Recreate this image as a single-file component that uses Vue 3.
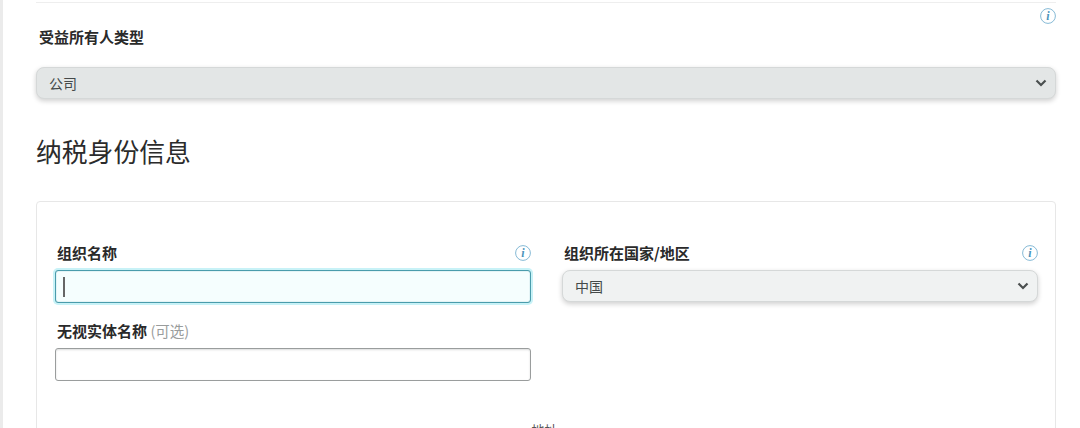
<script setup>
</script>

<template>
  <div class="page">
    <div class="content">
      <div class="top-rule"></div>
      <div class="info-row">
        <svg class="info" viewBox="0 0 16 16"><circle cx="8" cy="8" r="7.4" /><text x="8" y="12.2">i</text></svg>
      </div>
      <div class="label owner-label">受益所有人类型</div>
      <div class="select owner-select">
        <span>公司</span>
        <svg class="chev" viewBox="0 0 12 8"><path d="M1.5 1.5 6 6l4.5-4.5" /></svg>
      </div>
      <h2 class="title">纳税身份信息</h2>
      <div class="card">
        <div class="grid">
          <div class="field">
            <div class="label-row">
              <span class="label">组织名称</span>
              <svg class="info" viewBox="0 0 16 16"><circle cx="8" cy="8" r="7.4" /><text x="8" y="12.2">i</text></svg>
            </div>
            <div class="input focused"><i class="caret"></i></div>
          </div>
          <div class="field">
            <div class="label-row">
              <span class="label">组织所在国家/地区</span>
              <svg class="info" viewBox="0 0 16 16"><circle cx="8" cy="8" r="7.4" /><text x="8" y="12.2">i</text></svg>
            </div>
            <div class="select country-select">
              <span>中国</span>
              <svg class="chev" viewBox="0 0 12 8"><path d="M1.5 1.5 6 6l4.5-4.5" /></svg>
            </div>
          </div>
          <div class="field">
            <div class="label-row">
              <span class="label">无视实体名称 <span class="optional">(可选)</span></span>
            </div>
            <div class="input"></div>
          </div>
        </div>
        <div class="address">地址</div>
      </div>
    </div>
  </div>
</template>

<style>
html, body { margin: 0; height: 428px; overflow: hidden; background: #fff; }
</style>

<style scoped>
.page {
  box-sizing: border-box;
  height: 428px;
  overflow: hidden;
  border-left: 3px solid #ebebeb;
  padding: 2px 24px 0 33px;
  font-family: "Noto Sans CJK SC", "Liberation Sans", sans-serif;
  color: #2b2b2b;
}
.top-rule { height: 1px; background: #eeeeee; }
.info-row { display: flex; justify-content: flex-end; padding: 5px 0.5px 0 0; height: 15px; }
.info { width: 16px; height: 16px; flex: none; }
.info circle { fill: #fff; stroke: #86bad6; stroke-width: 1; }
.info text {
  fill: #4c94bb;
  font-family: "Liberation Serif", serif;
  font-style: italic;
  font-weight: 700;
  font-size: 12px;
  text-anchor: middle;
}
.label { font-size: 15px; font-weight: 700; line-height: 20px; color: #2a2a2a; }
.owner-label { padding: 4px 0 0 3px; }
.select {
  box-sizing: border-box;
  display: flex;
  align-items: center;
  justify-content: space-between;
  height: 32px;
  border: 1px solid #d5d8d8;
  border-radius: 8px;
  padding: 0 8px 0 12px;
  font-size: 14px;
  color: #444949;
  box-shadow: 0 2px 5px rgba(15, 17, 17, 0.2);
}
.owner-select { margin-top: 20px; background: #e3e6e6; width: 1020px; }
.country-select { background: #f0f2f2; }
.chev { width: 12px; height: 8px; }
.chev path { fill: none; stroke: #4a4f4f; stroke-width: 2.2; }
.title { margin: 32px 0 0; font-size: 25.8px; font-weight: 400; line-height: 40px; color: #2b2b2b; }
.card {
  box-sizing: border-box;
  width: 1020px;
  height: 300px;
  margin-top: 30px;
  border: 1px solid #e7e7e7;
  border-radius: 4px;
  padding: 41px 17px 0 18px;
}
.grid { display: grid; grid-template-columns: 476px 476px; column-gap: 31px; row-gap: 18px; align-content: start; }
.label-row { display: flex; justify-content: space-between; align-items: center; height: 20px; padding: 0 0 0 2px; margin-bottom: 7px; }
.optional { font-weight: 400; font-size: 14.5px; color: #999c9c; }
.input {
  box-sizing: border-box;
  height: 33px;
  border: 1px solid #9a9d9d;
  border-radius: 3px;
  background: #fff;
  box-shadow: inset 0 1px 2px rgba(15, 17, 17, 0.15);
  padding: 6px 7px;
}
.input.focused {
  border-color: #4a9cac;
  background: #f5fefe;
  box-shadow: 0 0 0 2px #c8f2f7, inset 0 0 1px #4a9cac;
}
.caret { display: block; width: 1.5px; height: 20px; background: #666; }
.address { font-size: 13px; line-height: 20px; text-align: center; margin-top: 39px; color: #555; padding-right: 4px; }
</style>
